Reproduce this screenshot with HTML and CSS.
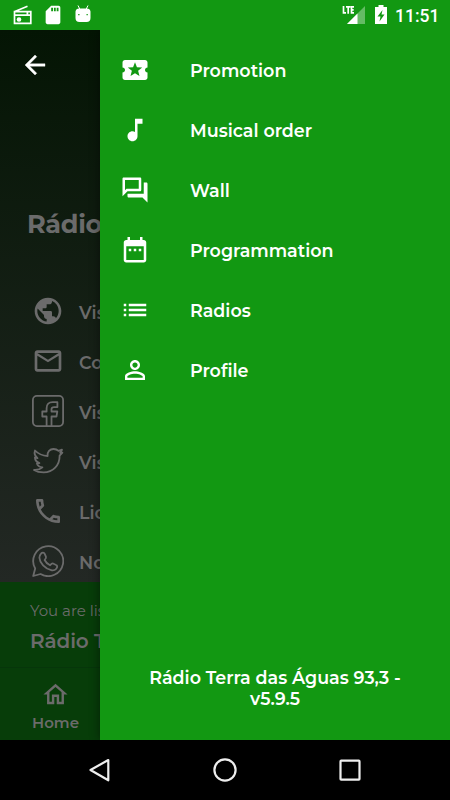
FILE: index.html
```html
<!DOCTYPE html>
<html lang="en">
<head>
<meta charset="utf-8">
<title>Rádio Terra das Águas 93,3</title>
<link rel="stylesheet" href="styles.css">
</head>
<body>
<div class="phone">
  <header class="status">
    <svg class="s-radio" viewBox="0 0 20 20"><path fill="none" stroke="#fff" stroke-width="1.700" d="M1.500 6.700h16.300v11.600H1.500zM1.800 6.500 14.500 1.300"/><path fill="#fff" d="M2 9.200h15.300v1.800H2zM13.500 7h1.800v3h-1.800z"/><circle cx="6" cy="14.500" r="2.300" fill="#fff"/></svg>
    <svg class="s-sd" viewBox="0 0 24 24"><path fill="#fff" d="M18 2h-8L4.020 8 4 20c0 1.100.9 2 2 2h12c1.100 0 2-.9 2-2V4c0-1.100-.9-2-2-2zm-6 6h-2V4h2v4zm3 0h-2V4h2v4zm3 0h-2V4h2v4z"/></svg>
    <svg class="s-droid" viewBox="0 0 16 18"><path fill="none" stroke="#fff" d="m3 .5 2 4M13 .5l-2 4"/><path fill="#fff" fill-rule="evenodd" d="M.5 6.500Q1 3.500 4 3.500h8q3 0 3.500 3v6.500Q15.500 17 11.500 17h-7Q.5 17 .5 13zM3.200 9v1.300h1.300V9zm8.300 0v1.300h1.300V9z"/></svg>
    <span class="grow"></span>
    <svg class="s-signal" viewBox="0 0 24 20"><path fill="#fff" opacity=".35" d="M23 1v18H5z"/><path fill="#fff" d="M15.500 8.500V19H5z"/><path fill="#129812" d="M0 0h12.500v9.500H0z"/><path fill="none" stroke="#fff" stroke-width="1.700" d="M1.500 1v6.800H4M4 1.800h4.500M6.200 1.800v6.900M12 1.800H9.500v6.100H12M9.500 4.800h2.200"/></svg>
    <svg class="s-bat" viewBox="0 0 12 20"><path fill="#fff" fill-rule="evenodd" d="M3.500 0h5v2H12v17H0V2h3.500zM7.500 5 2.500 11.500h3L4.500 16.500l5-7h-3z"/></svg>
    <span class="time">11:51</span>
  </header>
  <div class="body">
    <main class="page">
      <div class="top">
        <svg class="i30" viewBox="0 0 24 24"><path fill="#fff" stroke="#fff" stroke-width=".3" d="M20 11H7.830l5.590-5.590L12 4l-8 8 8 8 1.410-1.410L7.830 13H20v-2z"/></svg>
      </div>
      <h1 class="title">Rádio</h1>
      <ul class="links">
        <li><svg class="i32" viewBox="0 0 24 24"><path fill="currentColor" d="M12 2C6.480 2 2 6.480 2 12s4.480 10 10 10 10-4.480 10-10S17.520 2 12 2zm-1 17.930c-3.950-.49-7-3.850-7-7.930 0-.62.080-1.210.210-1.790L9 15v1c0 1.100.9 2 2 2v1.930zm6.900-2.540c-.26-.81-1-1.390-1.900-1.390h-1v-3c0-.55-.45-1-1-1H8v-2h2c.55 0 1-.45 1-1V7h2c1.100 0 2-.9 2-2v-.41c2.930 1.190 5 4.060 5 7.410 0 2.080-.8 3.970-2.100 5.390z"/></svg><span>Vis</span></li>
        <li><svg class="i32" viewBox="0 0 24 24"><path fill="currentColor" d="M22 6c0-1.100-.9-2-2-2H4c-1.100 0-2 .9-2 2v12c0 1.100.9 2 2 2h16c1.100 0 2-.9 2-2V6zm-2 0-8 5-8-5h16zm0 12H4V8l8 5 8-5v10z"/></svg><span>Co</span></li>
        <li><svg class="i32" viewBox="0 0 32 32"><g fill="none" stroke="currentColor" stroke-width="1.800" stroke-linejoin="round"><rect x=".9" y=".9" width="30.200" height="30.200" rx="4"/><path d="M14.600 31V21.500h-4.300v-5h4.300v-3.300c0-4.100 2.400-6 6-6h4.800v4.900h-3.200c-2 0-2.700.7-2.700 2.200v2.200h5.800l-.8 5h-5V31"/></g></svg><span>Vis</span></li>
        <li><svg class="i32" viewBox="0 0 32 32"><path fill="none" stroke="currentColor" stroke-width="1.800" stroke-linejoin="round" d="M3 5.500c3.400 3.600 7.500 5.200 12.600 5.500C15 6.500 18 4 21.500 4c2.200 0 3.800.7 5 1.900l3.500-1.200-1.800 3.100 2.200-.2-2.800 3.100c.2 9.500-6.600 16.600-16 16.600-3.800 0-7-.8-9.600-2.400 3.700.3 6.400-.7 8.400-2.500-3-.4-4.800-1.700-5.500-3.900l2.500-.3C4.500 17 3 15 2.900 12.400l2.600.8C2.900 10.900 2 8.200 3 5.500z"/></svg><span>Vis</span></li>
        <li><svg class="i32" viewBox="0 0 24 24"><path fill="currentColor" d="M6.540 5c.06.890.21 1.760.45 2.590l-1.200 1.200c-.41-1.200-.67-2.470-.76-3.790h1.510m9.860 12.020c.85.24 1.720.39 2.600.45v1.490c-1.320-.09-2.590-.35-3.800-.75l1.200-1.190M7.500 3H4c-.55 0-1 .45-1 1 0 9.390 7.610 17 17 17 .55 0 1-.45 1-1v-3.490c0-.55-.45-1-1-1-1.240 0-2.450-.2-3.570-.57-.1-.04-.21-.05-.31-.05-.26 0-.51.1-.71.290l-2.200 2.200c-2.830-1.450-5.150-3.760-6.590-6.590l2.200-2.200c.28-.28.360-.67.250-1.020C8.700 6.450 8.500 5.250 8.500 4c0-.55-.45-1-1-1z"/></svg><span>Lic</span></li>
        <li><svg class="i32" viewBox="0 0 32 32"><g fill="none" stroke="currentColor" stroke-width="1.800" stroke-linejoin="round"><path d="m1.200 31 2-7.500A15 15 0 1 1 8.600 29z"/><path d="M9 8.600c1.200-1.500 3-1.400 3.700.2l1.300 3.100c.4 1-.1 1.700-1.400 3.100 1.300 2.600 3.200 4.200 5.500 5.300 1.600-2 2-2.200 3-1.800l3 1.500c1.300.6 1.300 1.300.9 2.500-.8 2.300-3.600 3.200-5.800 2.600C13 23.500 7.700 18 7.400 12.700 7.300 11 8 9.700 9 8.600z"/></g></svg><span>No</span></li>
      </ul>
      <section class="player">
        <p class="small">You are lis</p>
        <p class="station">Rádio T</p>
      </section>
      <nav class="tab">
        <svg class="home-i" viewBox="0 0 24 24"><path fill="currentColor" d="m12 5.690 5 4.500V18h-2v-6H9v6H7v-7.810l5-4.500M12 3 2 12h3v8h6v-6h2v6h6v-8h3L12 3z"/></svg>
        <span>Home</span>
      </nav>
    </main>
    <aside class="drawer">
      <ul class="menu">
        <li><svg class="i30" viewBox="0 0 24 24"><path fill="#fff" d="M20 12c0-1.100.9-2 2-2V6c0-1.100-.9-2-2-2H4c-1.100 0-1.990.9-1.990 2v4c1.100 0 1.990.9 1.990 2s-.89 2-2 2v4c0 1.100.9 2 2 2h16c1.100 0 2-.9 2-2v-4c-1.100 0-2-.9-2-2zm-4.420 4.800L12 14.500l-3.580 2.300 1.080-4.120-3.290-2.690 4.240-.25L12 5.800l1.540 3.950 4.240.250-3.290 2.690 1.090 4.110z"/></svg><span>Promotion</span></li>
        <li><svg class="i30" viewBox="0 0 24 24"><path fill="#fff" d="M12 3v10.550c-.59-.34-1.270-.55-2-.55-2.210 0-4 1.790-4 4s1.790 4 4 4 4-1.790 4-4V7h4V3h-6z"/></svg><span>Musical order</span></li>
        <li><svg class="i30" viewBox="0 0 24 24"><path fill="#fff" d="M15 4v7H5.170L4 12.170V4h11m1-2H3c-.55 0-1 .45-1 1v14l4-4h10c.55 0 1-.45 1-1V3c0-.55-.45-1-1-1zm5 4h-2v9H6v2c0 .55.45 1 1 1h11l4 4V7c0-.55-.45-1-1-1z"/></svg><span>Wall</span></li>
        <li><svg class="i30" viewBox="0 0 24 24"><path fill="#fff" d="M7 11h2v2H7zm4 0h2v2h-2zm4 0h2v2h-2zM19 4h-1V1.500h-2V4H8V1.500H6V4H5c-1.110 0-1.990.9-1.990 2L3 20c0 1.100.89 2 2 2h14c1.100 0 2-.9 2-2V6c0-1.100-.9-2-2-2zm0 16H5V9h14z"/></svg><span>Programmation</span></li>
        <li><svg class="i30" viewBox="0 0 24 24"><path fill="#fff" d="M3 13h2v-2H3v2zm0 4h2v-2H3v2zm0-8h2V7H3v2zm4 4h14v-2H7v2zm0 4h14v-2H7v2zM7 7v2h14V7H7z"/></svg><span>Radios</span></li>
        <li><svg class="i30" viewBox="0 0 24 24"><path fill="#fff" d="M12 5.900c1.160 0 2.100.940 2.100 2.100s-.94 2.100-2.100 2.100S9.900 9.160 9.900 8s.94-2.100 2.100-2.100m0 9c2.970 0 6.100 1.460 6.100 2.100v1.100H5.900V17c0-.64 3.130-2.100 6.100-2.100M12 4C9.790 4 8 5.790 8 8s1.790 4 4 4 4-1.790 4-4-1.790-4-4-4zm0 9c-2.670 0-8 1.340-8 4v3h16v-3c0-2.660-5.330-4-8-4z"/></svg><span>Profile</span></li>
      </ul>
      <p class="version">Rádio Terra das Águas 93,3 -<br>v5.9.5</p>
    </aside>
  </div>
  <footer class="keys">
    <svg viewBox="0 0 30 30"><path d="M23.300 5 5.500 15l17.800 10.300z"/></svg>
    <svg viewBox="0 0 30 30"><circle cx="15" cy="15" r="10.600"/></svg>
    <svg viewBox="0 0 30 30"><rect x="5.500" y="5.700" width="19" height="19" rx=".7"/></svg>
  </footer>
</div>
</body>
</html>
```

FILE: styles.css
```css
* { box-sizing: border-box; margin: 0; padding: 0; }
ul { list-style: none; }
svg { display: block; flex: none; }
body { background: #000; font-family: Montserrat, Inter, "Liberation Sans", sans-serif; font-variant-ligatures: none; }
.phone { width: 450px; height: 800px; display: flex; flex-direction: column; overflow: hidden; }
.status { height: 30px; background: #129812; display: flex; align-items: center; padding: 0 10px 0 13px; color: #fff; }
.s-radio { width: 20px; height: 20px; margin-top: -1px; }
.s-sd { width: 22px; height: 22px; margin-left: 9px; }
.s-droid { width: 16px; height: 18px; margin: -2px 0 0 11px; }
.grow { flex: 1; }
.s-signal { width: 24px; height: 20px; }
.s-bat { width: 12px; height: 20px; margin-left: 9px; }
.time { width: 45px; margin-left: 8px; font: 500 17.500px/30px Roboto, sans-serif; padding-top: 2px; white-space: nowrap; }
.body { height: 710px; display: flex; }
.page { width: 100px; height: 710px; overflow: hidden; display: flex; flex-direction: column; background: linear-gradient(#041504, #232824 552px); color: #6b6b6b; white-space: nowrap; }
.i30 { width: 30px; height: 30px; }
.i32 { width: 32px; height: 32px; }
.top { height: 70px; padding: 20px 0 0 20px; }
.title { height: 48px; margin-top: 100px; padding-left: 27px; font-size: 25.500px; line-height: 48px; font-weight: 700; letter-spacing: -.3px; }
.links { height: 334px; padding-top: 38px; }
.links li { height: 50px; display: flex; align-items: center; gap: 15px; padding-left: 32px; font-size: 17.500px; font-weight: 600; }
.links span { padding-top: 2px; }
.player { height: 86px; background: #073d09; padding: 19px 0 0 30px; border-bottom: 1px solid #06360a; flex: none; }
.small { font-size: 15px; line-height: 20px; }
.station { font-size: 20px; line-height: 28px; font-weight: 600; margin-top: 6px; letter-spacing: -.1px; }
.tab { flex: 1; background: #073d09; display: flex; flex-direction: column; align-items: center; padding: 12px 0 0 11px; font-size: 15px; font-weight: 600; line-height: 20px; }
.home-i { width: 29px; height: 29px; margin-bottom: 4px; }
.drawer { width: 350px; height: 710px; background: #129812; color: #fff; display: flex; flex-direction: column; justify-content: space-between; padding: 10px 0 31px; box-shadow: 0 0 10px #0007; clip-path: inset(0 0 0 -20px); }
.menu li { height: 60px; display: flex; align-items: center; gap: 40px; padding-left: 20px; font-size: 17.500px; font-weight: 600; line-height: 24px; }
.menu span { padding-top: 2px; }
.version { text-align: center; font-size: 17.500px; font-weight: 600; line-height: 21px; }
.keys { height: 60px; display: flex; justify-content: space-between; padding: 15px 85px; }
.keys svg { width: 30px; height: 30px; fill: none; stroke: #eee; stroke-width: 2.200; stroke-linejoin: round; }
```
